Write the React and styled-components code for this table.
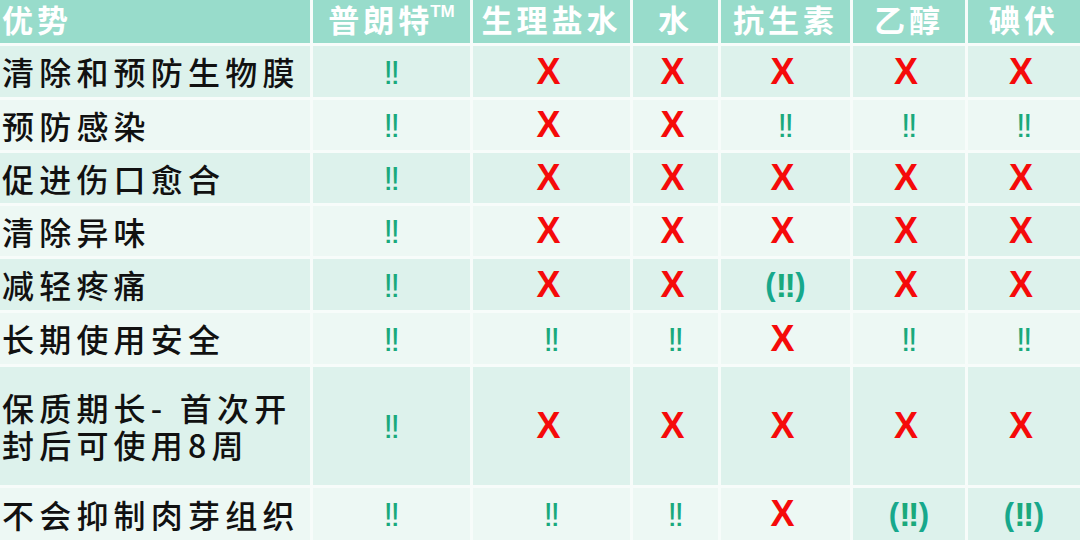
import React from "react";
import styled, { createGlobalStyle } from "styled-components";

const GlobalStyle = createGlobalStyle`
  html, body { margin: 0; padding: 0; background: #f7fcfa; }
  body { font-family: "Noto Sans CJK SC", "Noto Sans", sans-serif; }
`;

const Table = styled.div`
  width: 1080px;
  height: 540px;
  display: grid;
  grid-template-columns: 310px 157px 157px 85px 129px 112px 112px;
  grid-template-rows: 43px 51px 50px 50px 50px 51px 51px 118px 52px;
  gap: 3px;
  background: #f7fcfa;
  overflow: hidden;
`;

const tones = {
  head: "#98dccb",
  dark: "#ddf2ec",
  light: "#edf8f4",
};

const Cell = styled.div`
  background: ${(p) => tones[p.$tone]};
  display: flex;
  align-items: ${(p) => (p.$head ? "flex-start" : "center")};
  justify-content: ${(p) => (p.$left ? "flex-start" : "center")};
  padding-left: ${(p) => (p.$left ? "2px" : "0")};
  white-space: nowrap;
`;

const HeadText = styled.span`
  font-family: "Noto Sans CJK SC", sans-serif;
  font-weight: 700;
  font-size: 31px;
  letter-spacing: 4px;
  color: #ffffff;
  line-height: 38px;
`;

const Tm = styled.span`
  font-family: "Liberation Sans", Arial, sans-serif;
  font-size: 17px;
  font-weight: 700;
  letter-spacing: 0;
  vertical-align: top;
  line-height: 24px;
  margin-left: -3px;
`;

const Label = styled.span`
  font-family: "Noto Sans CJK SC", sans-serif;
  font-weight: 500;
  font-size: 32px;
  letter-spacing: 5.2px;
  color: #111111;
  line-height: 37px;
  white-space: normal;
`;

const Ok = styled.span`
  font-family: "Liberation Sans", Arial, sans-serif;
  font-size: 34px;
  letter-spacing: -2.5px;
  color: #1aa97c;
  line-height: 1;
  padding-right: 2px;
`;

const No = styled.span`
  font-family: "Liberation Sans", Arial, sans-serif;
  font-weight: 700;
  font-size: 36px;
  color: #f50a0a;
  line-height: 1;
  margin-left: -6px;
`;

const Paren = styled.span`
  font-family: "Liberation Sans", Arial, sans-serif;
  font-weight: 700;
  font-size: 31px;
  color: #17a88c;
  line-height: 1;
  display: inline-flex;
  align-items: center;
`;

const Mark = ({ v }) => {
  if (v === "x") return <No>X</No>;
  if (v === "p")
    return (
      <Paren>
        (<Ok>!!</Ok>)
      </Paren>
    );
  return <Ok>!!</Ok>;
};

const headers = ["生理盐水", "水", "抗生素", "乙醇", "碘伏"];

const rows = [
  { label: "清除和预防生物膜", v: ["o", "x", "x", "x", "x", "x"] },
  { label: "预防感染", v: ["o", "x", "x", "o", "o", "o"] },
  { label: "促进伤口愈合", v: ["o", "x", "x", "x", "x", "x"] },
  { label: "清除异味", v: ["o", "x", "x", "x", "x", "x"], hl: [4, 5] },
  { label: "减轻疼痛", v: ["o", "x", "x", "p", "x", "x"] },
  { label: "长期使用安全", v: ["o", "o", "o", "x", "o", "o"] },
  {
    label: (
      <>
        保质期长- 首次开
        <br />
        封后可使用8周
      </>
    ),
    v: ["o", "x", "x", "x", "x", "x"],
  },
  { label: "不会抑制肉芽组织", v: ["o", "o", "o", "x", "p", "p"], hl: [4, 5] },
];

export default function App() {
  return (
    <>
      <GlobalStyle />
      <Table>
        <Cell $tone="head" $head $left>
          <HeadText>优势</HeadText>
        </Cell>
        <Cell $tone="head" $head>
          <HeadText>
            普朗特<Tm>TM</Tm>
          </HeadText>
        </Cell>
        {headers.map((h) => (
          <Cell key={h} $tone="head" $head>
            <HeadText>{h}</HeadText>
          </Cell>
        ))}
        {rows.map((r, i) => {
          const tone = i % 2 === 0 ? "dark" : "light";
          return (
            <React.Fragment key={i}>
              <Cell $tone={tone} $left>
                <Label>{r.label}</Label>
              </Cell>
              {r.v.map((v, j) => (
                <Cell key={j} $tone={r.hl && r.hl.includes(j) ? "dark" : tone}>
                  <Mark v={v} />
                </Cell>
              ))}
            </React.Fragment>
          );
        })}
      </Table>
    </>
  );
}
